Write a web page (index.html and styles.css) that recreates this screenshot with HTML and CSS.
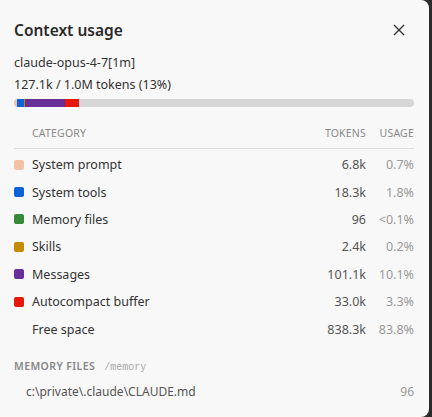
FILE: index.html
```html
<!DOCTYPE html>
<html lang="en">
<head>
    <meta charset="UTF-8">
    <meta name="viewport" content="width=device-width, initial-scale=1.0">
    <title>Context usage</title>
    <link rel="stylesheet" href="styles.css">
</head>
<body>
    <div class="panel">
        <div class="header">
            <h1>Context usage</h1>
            <button class="close" aria-label="Close">
                <svg width="12" height="12" viewBox="0 0 12 12"><path d="M1 1L11 11M11 1L1 11" stroke="#333" stroke-width="1.4" fill="none"/></svg>
            </button>
        </div>
        <div class="model">claude-opus-4-7[1m]</div>
        <div class="total">127.1k / 1.0M tokens (13%)</div>
        <div class="bar">
            <span class="seg prompt" style="width: 0.7%"></span>
            <span class="seg tools" style="width: 1.8%"></span>
            <span class="seg skills" style="width: 0.25%"></span>
            <span class="seg messages" style="width: 10.1%"></span>
            <span class="seg buffer" style="width: 3.3%"></span>
        </div>

        <div class="table">
            <div class="row head">
                <span class="cat">Category</span>
                <span class="num">Tokens</span>
                <span class="pct">Usage</span>
            </div>
            <div class="row">
                <span class="cat"><i class="swatch prompt"></i>System prompt</span>
                <span class="num">6.8k</span>
                <span class="pct">0.7%</span>
            </div>
            <div class="row">
                <span class="cat"><i class="swatch tools"></i>System tools</span>
                <span class="num">18.3k</span>
                <span class="pct">1.8%</span>
            </div>
            <div class="row">
                <span class="cat"><i class="swatch memory"></i>Memory files</span>
                <span class="num">96</span>
                <span class="pct">&lt;0.1%</span>
            </div>
            <div class="row">
                <span class="cat"><i class="swatch skills"></i>Skills</span>
                <span class="num">2.4k</span>
                <span class="pct">0.2%</span>
            </div>
            <div class="row">
                <span class="cat"><i class="swatch messages"></i>Messages</span>
                <span class="num">101.1k</span>
                <span class="pct">10.1%</span>
            </div>
            <div class="row">
                <span class="cat"><i class="swatch buffer"></i>Autocompact buffer</span>
                <span class="num">33.0k</span>
                <span class="pct">3.3%</span>
            </div>
            <div class="row">
                <span class="cat"><i class="swatch"></i>Free space</span>
                <span class="num">838.3k</span>
                <span class="pct">83.8%</span>
            </div>
        </div>

        <div class="section">
            <span class="section-title">Memory files</span>
            <span class="path">/memory</span>
        </div>
        <div class="file">
            <span>c:\private\.claude\CLAUDE.md</span>
            <span class="file-tokens">96</span>
        </div>
    </div>
</body>
</html>
```

FILE: styles.css
```css
body {
    margin: 0;
    background: #2b2b2b;
    font-family: "Noto Sans", "Open Sans", sans-serif;
    color: #333;
}
.panel {
    width: 429px;
    height: 417px;
    box-sizing: border-box;
    background: #f8f8f8;
    border-radius: 0 8px 8px 0;
    padding: 16px 15px 0 14px;
    overflow: hidden;
}
.header {
    display: flex;
    justify-content: space-between;
    align-items: center;
    height: 28px;
}
h1 {
    margin: 0;
    font-size: 15.5px;
    font-weight: 600;
    color: #2a2a2a;
}
.close {
    border: none;
    background: none;
    padding: 0;
    margin-right: 9px;
    width: 12px;
    height: 12px;
    display: flex;
}
.model, .total {
    font-size: 12.5px;
    line-height: 22px;
}
.model {
    margin-top: 8px;
}
.bar {
    display: flex;
    height: 8px;
    margin-top: 3px;
    background: #d6d6d6;
    border-radius: 4px;
    overflow: hidden;
}
.seg {
    height: 100%;
}
.prompt { background: #f2c2a6; }
.tools { background: #0b63d6; }
.memory { background: #368a37; }
.skills { background: #c48b00; }
.messages { background: #682f98; }
.buffer { background: #e6180c; }

.table {
    margin-top: 19px;
}
.row {
    display: flex;
    align-items: center;
    font-size: 12.5px;
    height: 27.4px;
}
.row.head {
    height: 22px;
    font-size: 10.5px;
    text-transform: uppercase;
    letter-spacing: 0.2px;
    color: #8a8a8a;
    border-bottom: 1px solid #dcdcdc;
    margin-bottom: 2px;
    align-items: flex-start;
}
.row.head .cat {
    padding-left: 18px;
}
.cat {
    flex: 1;
    display: flex;
    align-items: center;
}
.num {
    width: 60px;
    text-align: right;
    color: #555;
}
.pct {
    width: 48px;
    text-align: right;
    color: #999;
}
.row.head .num, .row.head .pct {
    color: #8a8a8a;
}
.swatch {
    width: 10px;
    height: 10px;
    border-radius: 2px;
    margin-right: 8px;
}
.section {
    margin-top: 16px;
    display: flex;
    align-items: baseline;
    gap: 9px;
}
.section-title {
    font-size: 10.5px;
    font-weight: 600;
    text-transform: uppercase;
    letter-spacing: 0.4px;
    color: #888;
}
.path {
    font-family: "Liberation Mono", monospace;
    font-size: 10px;
    color: #aaa;
}
.file {
    display: flex;
    justify-content: space-between;
    margin-top: 10px;
    padding-left: 12px;
    font-size: 12px;
    color: #555;
}
.file-tokens {
    color: #999;
}
```
